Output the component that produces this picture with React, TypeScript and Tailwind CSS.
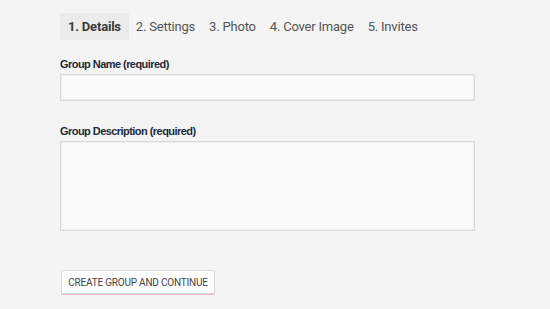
import React from "react";

export default function App() {
  const tabs = ["1. Details", "2. Settings", "3. Photo", "4. Cover Image", "5. Invites"];
  return (
    <div className="w-[550px] h-[309px] bg-[#f4f4f4] overflow-hidden" style={{ fontFamily: "Roboto, sans-serif" }}>
      <div className="pl-[60px] pt-[13px]">
        <nav className="flex items-center h-[27px]">
          {tabs.map((t, i) => (
            <div
              key={t}
              className={
                i === 0
                  ? "h-[27px] px-[8px] flex items-center bg-[#ebebeb] text-[#3a3a3a] font-bold text-[13px] tracking-[-0.2px]"
                  : "h-[27px] px-[7px] flex items-center text-[#555] text-[13px] tracking-[-0.2px]"
              }
            >
              {t}
            </div>
          ))}
        </nav>
        <form className="mt-[17px] w-[415px]" style={{ fontFamily: "'Liberation Sans', Arial, sans-serif" }}>
          <label className="block text-[11px] font-bold text-[#1f2a3a] leading-[14px] tracking-[-0.55px]">Group Name (required)</label>
          <div className="mt-[3px] h-[27px] bg-[#fafafa] border border-[#d9d9d9] shadow-[inset_0_0_0_1px_#eeeeee]" />
          <label className="block mt-[23px] text-[11px] font-bold text-[#1f2a3a] leading-[14px] tracking-[-0.55px]">Group Description (required)</label>
          <div className="mt-[3px] h-[90px] bg-[#fafafa] border border-[#d9d9d9] shadow-[inset_0_0_0_1px_#eeeeee]" />
          <button
            type="button"
            className="mt-[39px] ml-[1px] h-[24px] w-[154px] bg-white border border-[#d8d8d8] rounded-[2px] shadow-[0_1px_0_#f2b8c8] text-[10px] text-[#444] uppercase tracking-[-0.2px] flex items-center justify-center"
            style={{ fontFamily: "Roboto, sans-serif" }}
          >
            Create Group and Continue
          </button>
        </form>
      </div>
    </div>
  );
}
